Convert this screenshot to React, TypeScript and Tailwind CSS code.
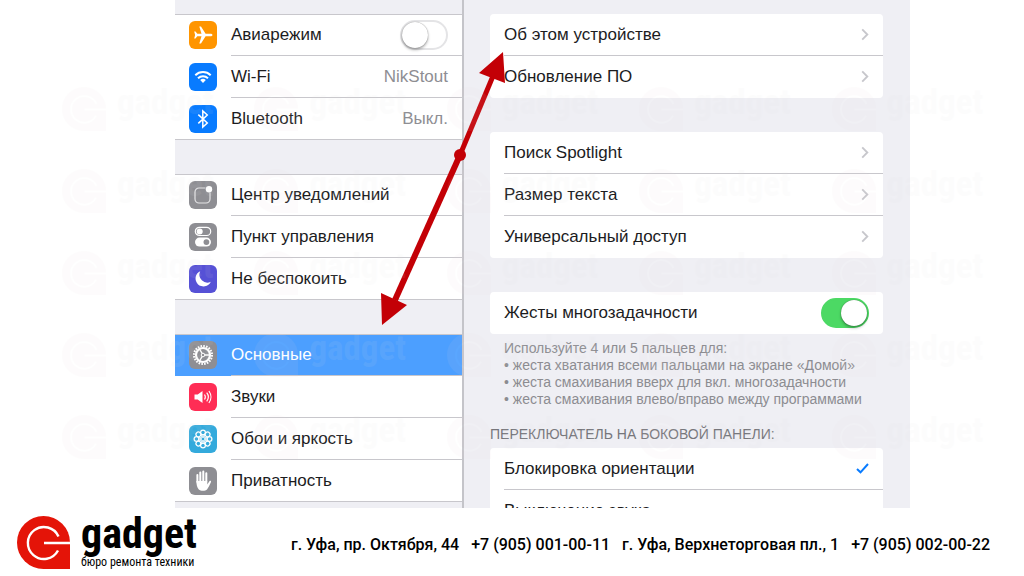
import { useState } from 'react';
import type { ReactNode } from 'react';

const WATERMARK_COUNT = 25;

function LogoMark({ className, color = '#e41408' }: { className?: string; color?: string }) {
  return (
    <svg viewBox="0 0 53 53" className={className} aria-hidden="true">
      <path d="M26.5 0A26.5 26.5 0 0 1 53 26.5V53H26.5A26.5 26.5 0 0 1 26.5 0Z" fill={color} />
      <path d="M53 27H27M41.5 20.5A16 16 0 1 0 41 34.5" fill="none" stroke="#fff" strokeWidth="2.4" />
    </svg>
  );
}

function IconBox({ className, children }: { className: string; children: ReactNode }) {
  return (
    <span className={`flex size-7 shrink-0 items-center justify-center rounded-md text-white ${className}`}>
      {children}
    </span>
  );
}

function PlaneIcon() {
  return (
    <svg viewBox="0 0 28 28" className="size-7" fill="#fff">
      <path d="M23.5 14C23.5 13.1 22.5 12.7 21.2 12.7H16.6L12 5.6H10.3L12.5 12.7H8.3L6.5 10.4H5.2L6.1 14L5.2 17.6H6.5L8.3 15.3H12.5L10.3 22.4H12L16.6 15.3H21.2C22.5 15.3 23.5 14.9 23.5 14Z" />
    </svg>
  );
}

function BluetoothIcon() {
  return (
    <svg viewBox="0 0 28 28" className="size-7" fill="none" stroke="#fff" strokeWidth="1.5">
      <path d="M9.3 9.6L18.3 18L13.8 22V6L18.3 10L9.3 18.4" />
    </svg>
  );
}

function WifiIcon() {
  return (
    <svg viewBox="0 0 28 28" className="size-7" fill="none" stroke="#fff" strokeWidth="2">
      <path d="M6.3 12.2A11 11 0 0 1 21.7 12.2" />
      <path d="M9 15.3A7.2 7.2 0 0 1 19 15.3" />
      <path d="M14 20L11.2 17.1A4 4 0 0 1 16.8 17.1Z" fill="#fff" stroke="none" />
    </svg>
  );
}

function NotificationsIcon() {
  return (
    <svg viewBox="0 0 28 28" className="size-7" fill="none" stroke="#e4e4e6" strokeWidth="1.2">
      <path d="M16.5 7H10A4 4 0 0 0 6 11V18A4 4 0 0 0 10 22H17A4 4 0 0 0 21 18V11.5" />
      <circle cx="20" cy="8.3" r="3.2" fill="#fff" stroke="none" />
    </svg>
  );
}

function ControlsIcon() {
  return (
    <svg viewBox="0 0 28 28" className="size-7" fill="none" stroke="#fff" strokeWidth="1.2">
      <rect x="6.3" y="4.3" width="15.4" height="8.2" rx="4.1" />
      <circle cx="10.7" cy="8.4" r="3" fill="#fff" stroke="none" />
      <rect x="6" y="14.6" width="16" height="9" rx="4.5" fill="#fff" stroke="none" />
      <circle cx="17.4" cy="19.1" r="2.9" fill="#8e8e93" stroke="none" />
    </svg>
  );
}

function MoonIcon() {
  return (
    <svg viewBox="0 0 28 28" className="size-7">
      <path d="M11.2 6.2A8 8 0 1 0 21.8 16.8A8 8 0 0 1 11.2 6.2Z" fill="#fff" />
    </svg>
  );
}

function GearIcon() {
  return (
    <svg viewBox="0 0 28 28" className="size-7" fill="none" stroke="#fff">
      <circle cx="14" cy="14" r="9" strokeWidth="2" strokeDasharray="1.6 1.227" />
      <circle cx="14" cy="14" r="7" strokeWidth="2.2" />
      <circle cx="14" cy="14" r="1.8" strokeWidth="1" />
      <path d="M15.8 14H21M13.1 12.4L10.5 8M13.1 15.6L10.5 20" strokeWidth="1.3" />
    </svg>
  );
}

function SoundIcon() {
  return (
    <svg viewBox="0 0 28 28" className="size-7" fill="none" stroke="#fff" strokeWidth="1.2">
      <path d="M5.5 11.5H8.7L13.5 8V20L8.7 16.5H5.5Z" fill="#fff" stroke="none" />
      <path d="M15.5 11.5A4.5 4.5 0 0 1 15.5 16.5" />
      <path d="M17.7 9.7A7 7 0 0 1 17.7 18.3" />
      <path d="M19.9 8A10 10 0 0 1 19.9 20" />
    </svg>
  );
}

function FlowerIcon() {
  const angles = [0, 45, 90, 135, 180, 225, 270, 315];
  return (
    <svg viewBox="0 0 28 28" className="size-7" fill="none" stroke="#fff" strokeWidth="1.2">
      {angles.map((angle) => (
        <g key={angle} transform={`rotate(${angle} 14 14)`}>
          <circle cx="14" cy="7.5" r="2.4" />
          <circle cx="14" cy="11" r="1.3" strokeWidth="0.9" />
        </g>
      ))}
    </svg>
  );
}

function HandIcon() {
  return (
    <svg viewBox="0 0 28 28" className="size-7" fill="none" stroke="#fff" strokeWidth="2" strokeLinecap="round">
      <path d="M8.4 15V8M11.3 14V5.5M14.3 14V4.6M17.3 14V6.2" />
      <path d="M7.4 14H18.3V17.5L20.4 14.2C21 13.4 22.4 13.8 22 15C20.8 18 19.6 20.2 18 22.4C16.5 24.2 11.5 24.2 9.8 22.4C8 20.4 7.4 17.5 7.4 14Z" fill="#fff" stroke="none" />
    </svg>
  );
}

function Switch({ id, defaultChecked = false }: { id: string; defaultChecked?: boolean }) {
  return (
    <input
      id={id}
      type="checkbox"
      role="switch"
      defaultChecked={defaultChecked}
      className="flex h-[30px] w-12 shrink-0 appearance-none items-center rounded-full border-2 border-[#e4e4e6] bg-white before:size-[26px] before:rounded-full before:bg-white before:shadow-[0_2px_3px_rgba(0,0,0,0.3),0_0_1px_rgba(0,0,0,0.5)] before:content-[''] checked:justify-end checked:border-[#4cd964] checked:bg-[#4cd964]"
    />
  );
}

function Chevron() {
  return (
    <svg viewBox="0 0 8 14" className="h-[13px] w-2" fill="none" stroke="#c7c7cc" strokeWidth="2">
      <path d="M1 1.5L6.5 7L1 12.5" />
    </svg>
  );
}

type Item = { label: string; icon: ReactNode; value?: string; active?: boolean };

const CONNECTIONS: Item[] = [
  { label: 'Wi-Fi', value: 'NikStout', icon: <IconBox className="bg-[#087bff]"><WifiIcon /></IconBox> },
  { label: 'Bluetooth', value: 'Выкл.', icon: <IconBox className="bg-[#087bff]"><BluetoothIcon /></IconBox> },
];

const ALERTS: Item[] = [
  { label: 'Центр уведомлений', icon: <IconBox className="bg-[#8e8e93]"><NotificationsIcon /></IconBox> },
  { label: 'Пункт управления', icon: <IconBox className="bg-[#8e8e93]"><ControlsIcon /></IconBox> },
  { label: 'Не беспокоить', icon: <IconBox className="bg-[#5651d6]"><MoonIcon /></IconBox> },
];

const DEVICE: Item[] = [
  { label: 'Основные', active: true, icon: <IconBox className="bg-[#8e8e93]"><GearIcon /></IconBox> },
  { label: 'Звуки', icon: <IconBox className="bg-[#ff2d55]"><SoundIcon /></IconBox> },
  { label: 'Обои и яркость', icon: <IconBox className="bg-[#34aadc]"><FlowerIcon /></IconBox> },
  { label: 'Приватность', icon: <IconBox className="bg-[#8e8e93]"><HandIcon /></IconBox> },
];

function SideRow({ item }: { item: Item }) {
  return (
    <a
      href="#"
      className={`group flex h-[42px] items-center gap-[14px] pl-[14px] ${item.active ? 'bg-[#4c9fff] text-white' : ''}`}
    >
      {item.icon}
      <span className="flex h-full flex-1 items-center justify-between border-b border-[#c8c7cc] pr-[14px] group-last:border-transparent">
        {item.label}
        {item.value && <span className="text-[#8e8e93]">{item.value}</span>}
      </span>
    </a>
  );
}

function SideGroup({ children }: { children: ReactNode }) {
  return (
    <div className="relative bg-white after:pointer-events-none after:absolute after:inset-0 after:border-y after:border-[#c8c7cc]">
      {children}
    </div>
  );
}

function LinkCard({ labels }: { labels: string[] }) {
  return (
    <div className="rounded bg-white pl-[14px]">
      {labels.map((label) => (
        <a
          key={label}
          href="#"
          className="flex h-[42px] items-center justify-between border-b border-[#c8c7cc] pr-[14px] last:border-transparent"
        >
          {label}
          <Chevron />
        </a>
      ))}
    </div>
  );
}

function SideSwitchCard() {
  const [mode, setMode] = useState('Блокировка ориентации');

  return (
    <fieldset>
      <legend className="pt-[17px] pb-[5px] text-sm leading-[18px] text-[#76767b]">
        ПЕРЕКЛЮЧАТЕЛЬ НА БОКОВОЙ ПАНЕЛИ:
      </legend>
      <div className="rounded bg-white pl-[14px]">
        {['Блокировка ориентации', 'Выключение звука'].map((label) => (
          <label
            key={label}
            className="flex h-[42px] items-center justify-between border-b border-[#c8c7cc] pr-[14px] last:border-transparent"
          >
            {label}
            <input
              type="radio"
              name="side-switch"
              checked={mode === label}
              onChange={() => setMode(label)}
              className="size-0 appearance-none"
            />
            {mode === label && (
              <svg viewBox="0 0 13 11" className="h-[11px] w-[13px]" fill="none" stroke="#087bff" strokeWidth="2">
                <path d="M1 6L4.5 9.3L12 1" />
              </svg>
            )}
          </label>
        ))}
      </div>
    </fieldset>
  );
}

function Arrow() {
  return (
    <svg viewBox="0 0 735 508" className="pointer-events-none absolute top-0 left-0 h-[508px] w-[735px]" aria-hidden="true">
      <g stroke="#c30006" fill="#c30006">
        <path d="M285 155L318 76" strokeWidth="5" />
        <path d="M285 155L220 300" strokeWidth="6" />
        <path d="M328 52L304 73L330 83ZM207 325L206 293L232 305Z" stroke="none" />
        <circle cx="285" cy="155" r="6" stroke="none" />
      </g>
    </svg>
  );
}

// Faint repeated logo laid over the whole screen
function Watermark() {
  return (
    <div
      className="pointer-events-none absolute inset-x-0 top-[87px] grid grid-cols-5 gap-y-[37px] pl-[62px] opacity-8"
      aria-hidden="true"
    >
      {Array.from({ length: WATERMARK_COUNT }, (_, i) => (
        <div key={i} className="flex h-[45px] gap-[11px]">
          <LogoMark className="size-11" color="#ebdadd" />
          <span className="font-['Roboto_Condensed','Roboto',sans-serif] text-[35px] leading-8 font-bold text-[#e2e2e2]">gadget</span>
        </div>
      ))}
    </div>
  );
}

export default function App() {
  return (
    <div className="relative flex h-screen flex-col overflow-hidden bg-white font-['Liberation_Sans',Arial,sans-serif] text-[17px] leading-5 text-[#1c1c1e]">
      <main className="min-h-0 flex-1 overflow-hidden pr-[114px] pl-[175px]">
        <div className="relative flex h-full bg-[#efeff4]">
          <nav className="flex w-[289px] shrink-0 flex-col gap-[34px] border-r-2 border-[#c4c4c9] pt-[14px]">
            <SideGroup>
              <div className="flex h-[42px] items-center gap-[14px] pl-[14px]">
                <IconBox className="bg-[#ff9500]"><PlaneIcon /></IconBox>
                <div className="flex h-full flex-1 items-center justify-between border-b border-[#c8c7cc] pr-[14px]">
                  <label htmlFor="airplane">Авиарежим</label>
                  <Switch id="airplane" />
                </div>
              </div>
              {CONNECTIONS.map((item) => <SideRow key={item.label} item={item} />)}
            </SideGroup>
            <SideGroup>
              {ALERTS.map((item) => <SideRow key={item.label} item={item} />)}
            </SideGroup>
            <SideGroup>
              {DEVICE.map((item) => <SideRow key={item.label} item={item} />)}
            </SideGroup>
          </nav>

          <section className="flex-1 pt-[14px] pr-[27px] pl-[26px]">
            <div className="flex flex-col gap-[34px]">
              <LinkCard labels={['Об этом устройстве', 'Обновление ПО']} />
              <LinkCard labels={['Поиск Spotlight', 'Размер текста', 'Универсальный доступ']} />
              <div className="flex h-[42px] items-center justify-between rounded bg-white px-[14px]">
                <label htmlFor="gestures">Жесты многозадачности</label>
                <Switch id="gestures" defaultChecked />
              </div>
            </div>
            <div className="pt-[6px] pl-[14px] text-sm leading-[17px] whitespace-nowrap text-[#8c8c91]">
              <p>Используйте 4 или 5 пальцев для:</p>
              <p>• жеста хватания всеми пальцами на экране «Домой»</p>
              <p>• жеста смахивания вверх для вкл. многозадачности</p>
              <p>• жеста смахивания влево/вправо между программами</p>
            </div>
            <SideSwitchCard />
          </section>
          <Arrow />
        </div>
      </main>

      <footer className="flex h-[68px] shrink-0 items-center justify-between pr-[34px] pl-[17px] font-['Roboto',sans-serif] text-black">
        <a href="#" className="flex items-center gap-[11px]">
          <LogoMark className="size-[53px]" />
          <span className="flex flex-col font-['Roboto_Condensed','Roboto',sans-serif]">
            <span className="text-[42px] leading-[40px] font-bold">gadget</span>
            <span className="text-xs leading-4">бюро ремонта техники</span>
          </span>
        </a>
        <p className="flex gap-3 pt-[6px] text-base font-medium">
          <span>г. Уфа, пр. Октября, 44</span>
          <span>+7 (905) 001-00-11</span>
          <span>г. Уфа, Верхнеторговая пл., 1</span>
          <span>+7 (905) 002-00-22</span>
        </p>
      </footer>
      <Watermark />
    </div>
  );
}
